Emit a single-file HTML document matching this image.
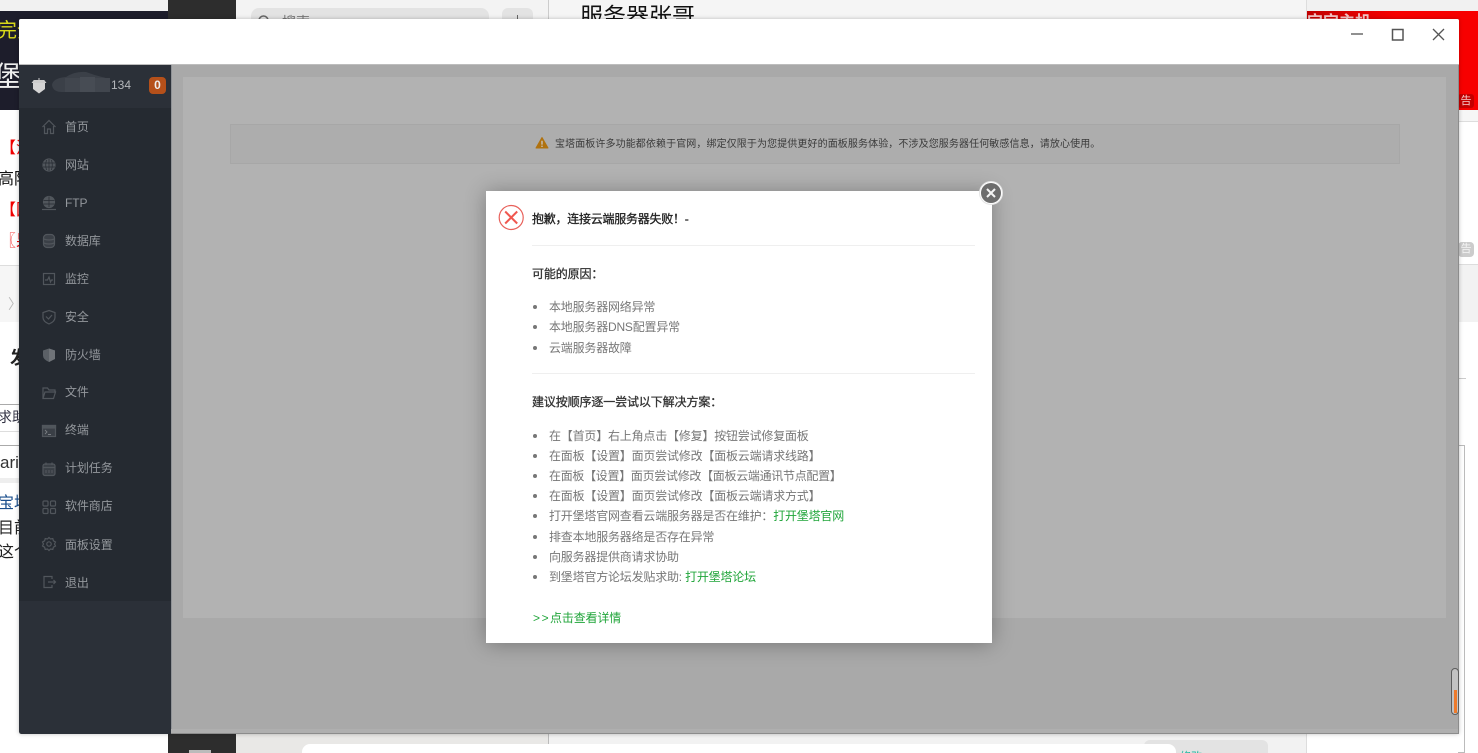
<!DOCTYPE html>
<html lang="zh"><head><meta charset="utf-8"><title>宝塔面板</title>
<style>
html,body{margin:0;padding:0;width:1478px;height:753px;overflow:hidden;background:#fff}
body{position:relative;font-family:"Liberation Sans","Noto Sans CJK SC",sans-serif}
.a{position:absolute}
.t{position:absolute;white-space:nowrap;line-height:20px}
.nav{position:absolute;left:65px;font-size:12px;color:#94989d;line-height:20px;white-space:nowrap;letter-spacing:-.1px}
.ic{position:absolute;left:41px;width:16px;height:16px;fill:none;stroke:#51565c;stroke-width:1.2}
.li{position:absolute;left:549px;font-size:12px;line-height:20px;color:#777;white-space:nowrap;letter-spacing:-.2px}
.li:before{content:"";position:absolute;left:-16px;top:8px;width:4px;height:4px;border-radius:50%;background:#777}
.li b{font-weight:400;color:#20a53a}
.h{position:absolute;left:532px;font-size:12px;line-height:20px;color:#333;font-weight:400;-webkit-text-stroke:.3px currentColor;white-space:nowrap;letter-spacing:-.12px}
.bg{font-size:16px;color:#111}
</style></head><body>
<!-- background page -->
<div class="a" style="left:0;top:0;width:168px;height:11px;background:#f1f1f1"></div>
<div class="a" style="left:0;top:11px;width:168px;height:99px;background:#1d1d2b"></div>
<div class="t" style="left:-3px;top:21px;font-size:20px;color:#d9d91a">完全</div>
<div class="t" style="left:-6px;top:67px;font-size:28px;color:#eee">堡</div>
<div class="t bg" style="left:0;top:139px;color:#f00000">【流</div>
<div class="t bg" style="left:-2px;top:170px">高阶</div>
<div class="t bg" style="left:0;top:201px;color:#f00000">【国</div>
<div class="t bg" style="left:0;top:232px;color:#f00000">〖果</div>
<div class="a" style="left:0;top:265px;width:168px;height:56px;background:#f6f6f6;border-top:1px solid #ddd"></div>
<div class="t" style="left:8px;top:294px;font-size:14px;color:#bbb">〉</div>
<div class="t" style="left:10px;top:348px;font-size:18px;color:#222;font-weight:700">发</div>
<div class="a" style="left:0;top:404px;width:168px;height:26px;border-top:1px solid #aaa;border-bottom:1px solid #ddd"></div>
<div class="t" style="left:-2px;top:407px;font-size:14px;color:#334">求助</div>
<div class="a" style="left:0;top:445px;width:168px;height:32px;border-top:1px solid #aaa;border-bottom:5px solid #eee"></div>
<div class="t" style="left:0;top:453px;font-size:17px;color:#333">arial</div>
<div class="t bg" style="left:-2px;top:494px;color:#1a4e8c">宝塔</div>
<div class="t bg" style="left:-2px;top:519px;color:#222">目前</div>
<div class="t bg" style="left:-2px;top:543px;color:#222">这个</div>

<div class="a" style="left:168px;top:0;width:68px;height:753px;background:#2d2d2d"></div>
<div class="a" style="left:236px;top:0;width:312px;height:19px;background:#f3f3f3"></div>
<div class="a" style="left:548px;top:0;width:758px;height:19px;background:#f5f5f5;border-left:1px solid #ccc"></div>
<div class="a" style="left:251px;top:8px;width:238px;height:20px;background:#e3e3e3;border-radius:8px"></div>
<svg class="a" style="left:257px;top:14px" width="14" height="14"><circle cx="6.5" cy="6.5" r="4.5" fill="none" stroke="#666" stroke-width="1.5"/></svg>
<div class="t" style="left:282px;top:12px;font-size:14px;color:#777">搜索</div>
<div class="a" style="left:502px;top:8px;width:31px;height:20px;background:#e3e3e3;border-radius:6px"></div>
<div class="a" style="left:517px;top:15px;width:1px;height:6px;background:#666"></div>
<div class="t" style="left:580px;top:2px;font-size:23px;color:#111;line-height:28px">服务器张哥</div>
<div class="a" style="left:1306px;top:0;width:172px;height:11px;background:#f1f1f1;border-left:1px solid #bbb"></div>
<div class="a" style="left:1306px;top:11px;width:172px;height:99px;background:#f70000"></div>
<div class="a" style="left:1306px;top:11px;width:90px;height:8px;background:linear-gradient(90deg,#c00000,#f70000)"></div>
<div class="t" style="left:1307px;top:13px;font-size:16px;font-weight:700;color:#f3c4c4">宝宝主机</div>
<div class="a" style="left:1458px;top:94px;width:16px;height:14px;background:#c40000;border-radius:3px;font-size:11px;line-height:14px;color:#f5caca;text-align:center">告</div>
<div class="a" style="left:1306px;top:110px;width:172px;height:11px;background:#f6f6f6;border-bottom:1px solid #ddd"></div>
<div class="a" style="left:1458px;top:242px;width:16px;height:15px;background:#ccc;border-radius:4px;font-size:11px;line-height:15px;color:#f4f4f4;text-align:center">告</div>
<div class="a" style="left:1458px;top:264px;width:20px;height:57px;background:#f2f2f2;border-top:1px solid #ddd"></div>
<div class="a" style="left:1458px;top:378px;width:8px;height:1px;background:#ccc"></div>
<div class="a" style="left:1458px;top:445px;width:7px;height:308px;border:1px solid #bbb;border-left:0;box-sizing:border-box"></div>
<div class="a" style="left:236px;top:734px;width:312px;height:19px;background:#e9e8e6"></div>
<div class="a" style="left:548px;top:734px;width:758px;height:19px;background:#f2f2f2"></div>
<div class="a" style="left:548px;top:734px;width:1px;height:10px;background:#bbb"></div>
<div class="a" style="left:1144px;top:740px;width:124px;height:13px;background:#e3e3e3;border-radius:6px 6px 0 0"></div>
<div class="a" style="left:302px;top:744px;width:874px;height:9px;background:#fff;border-radius:8px 8px 0 0"></div>
<div class="t" style="left:1180px;top:747px;font-size:11px;color:#20b8a0">修改</div>
<div class="a" style="left:1306px;top:0;width:1px;height:753px;background:#ddd"></div>
<div class="a" style="left:189px;top:750px;width:22px;height:3px;background:#bbb"></div>

<!-- window -->
<div class="a" style="left:19px;top:19px;width:1440px;height:715px;background:#a9a9a9;border-radius:2px;overflow:hidden;box-shadow:0 0 4px rgba(0,0,0,.25)">
  <div class="a" style="left:0;top:0;width:1440px;height:45px;background:#fff;border-bottom:1px solid #bdbdbd;box-sizing:content-box"></div>
</div>
<svg class="a" style="left:1340px;top:24px" width="110" height="20" fill="none" stroke="#555" stroke-width="1.3">
  <path d="M11 10H23"/>
  <rect x="52.5" y="5.5" width="10.5" height="10.5" stroke-width="1.5"/>
  <path d="M93 5L104 16M104 5L93 16"/>
</svg>

<!-- main -->
<div class="a" style="left:171px;top:65px;width:1287px;height:664px;background:#a9a9a9;border-left:1px solid #8f9296;box-sizing:border-box"></div>
<div class="a" style="left:171px;top:729px;width:1287px;height:4px;background:#afafaf"></div>
<div class="a" style="left:1458px;top:65px;width:1px;height:668px;background:#8c8c8c"></div>
<div class="a" style="left:171px;top:733px;width:1288px;height:1px;background:#8c8c8c"></div>
<div class="a" style="left:183px;top:77px;width:1263px;height:541px;background:#b2b2b2"></div>
<div class="a" style="left:230px;top:124px;width:1170px;height:40px;background:#adadad;border:1px solid #a7a7a7;box-sizing:border-box"></div>
<svg class="a" style="left:535px;top:136px" width="14" height="13"><path d="M7 1.5L13 12H1Z" fill="#b0720f" stroke="#b0720f" stroke-linejoin="round"/><path d="M7 4.8V8.6M7 9.6V11" stroke="#c9c9c9" stroke-width="1.3"/></svg>
<div class="t" style="left:555px;top:137px;font-size:10px;color:#3a3a3a;width:545px;letter-spacing:.1px;line-height:16px">宝塔面板许多功能都依赖于官网，绑定仅限于为您提供更好的面板服务体验，不涉及您服务器任何敏感信息，请放心使用。</div>

<!-- sidebar -->
<div class="a" style="left:19px;top:65px;width:152px;height:669px;background:#252a31;border-radius:0 0 0 3px"></div>
<div class="a" style="left:19px;top:65px;width:152px;height:43px;background:#2b3038"></div>
<div class="a" style="left:19px;top:601px;width:152px;height:133px;background:#2b3038;border-radius:0 0 0 3px"></div>
<svg class="a" style="left:31px;top:77px" width="16" height="18"><path d="M2 5H14V12L8 16.5L2 12Z" fill="#d4d4d4"/><path d="M8 1V4M3 3.5H13L14.5 5.5H1.5Z" stroke="#ccc" fill="#ccc"/></svg>
<svg class="a" style="left:50px;top:70px" width="62" height="24"><path d="M2 15Q3 8 16 7Q25 1 36 2Q44 5 52 7Q60 8 60 15Q60 22 50 22H12Q3 22 2 15Z" fill="#3b4048"/><rect x="15" y="8" width="15" height="14" fill="#41464e"/><rect x="30" y="7" width="15" height="15" fill="#474c54"/><rect x="45" y="8" width="15" height="14" fill="#41464e"/></svg>
<div class="t" style="left:111px;top:75px;font-size:12px;color:#b4b7bb">134</div>
<div class="a" style="left:149px;top:77px;width:17px;height:17px;background:#b5501a;border-radius:4px;color:#eee;font-size:12px;font-weight:700;line-height:17px;text-align:center">0</div>

<svg class="ic" style="top:119px" viewBox="0 0 16 16"><path d="M1.5 8L8 1.5L14.5 8M3.5 7V14.5H6.5V10H9.5V14.5H12.5V7"/></svg>
<div class="nav" style="top:117px">首页</div>
<svg class="ic" style="top:157px" viewBox="0 0 16 16"><circle cx="8" cy="8" r="6" fill="#51565c"/><path d="M2 6H14M2 10H14M8 2V14M5.5 3Q4 8 5.5 13M10.5 3Q12 8 10.5 13" stroke="#252a31" stroke-width=".7"/></svg>
<div class="nav" style="top:155px">网站</div>
<svg class="ic" style="top:195px" viewBox="0 0 16 16"><circle cx="8" cy="7" r="5.5" fill="#51565c"/><path d="M2.5 5.5H13.5M2.5 9H13.5M8 1.5V12" stroke="#252a31" stroke-width=".7"/><path d="M1 14.5H15"/></svg>
<div class="nav" style="top:193px">FTP</div>
<svg class="ic" style="top:233px" viewBox="0 0 16 16"><rect x="2.5" y="1.5" width="11" height="13" rx="3.5" fill="#3b4047"/><path d="M2.5 6Q8 8 13.5 6M2.5 10Q8 12 13.5 10"/></svg>
<div class="nav" style="top:231px">数据库</div>
<svg class="ic" style="top:271px" viewBox="0 0 16 16"><rect x="2.5" y="2.5" width="11" height="11"/><path d="M4 9H6.5L8 6L9.5 11L10.5 9H12"/></svg>
<div class="nav" style="top:269px">监控</div>
<svg class="ic" style="top:309px" viewBox="0 0 16 16"><path d="M8 1.5L14 3.5V8.5Q14 12.5 8 15Q2 12.5 2 8.5V3.5Z"/><path d="M5 7.5L7.5 10L11 6"/></svg>
<div class="nav" style="top:307px">安全</div>
<svg class="ic" style="top:347px" viewBox="0 0 16 16"><path d="M8 1.5L14 3.5V8.5Q14 12.5 8 15Q2 12.5 2 8.5V3.5Z" fill="#5b6066" stroke="none"/><path d="M8 1.5V15L14 12V3.5Z" fill="#6f7378" stroke="none"/></svg>
<div class="nav" style="top:345px">防火墙</div>
<svg class="ic" style="top:385px" viewBox="0 0 16 16"><path d="M2 13.5V3H6.5L8 5H14V7M2 13.5H12.5L14.5 7H4Z"/></svg>
<div class="nav" style="top:382px">文件</div>
<svg class="ic" style="top:423px" viewBox="0 0 16 16"><rect x="1.5" y="2.5" width="13" height="11" fill="#3a3f46"/><rect x="1.5" y="2.5" width="13" height="2.5" fill="#51565c"/><path d="M4 7L6 9L4 11M7 11.5H10" stroke="#7a7e83" stroke-width=".9"/></svg>
<div class="nav" style="top:420px">终端</div>
<svg class="ic" style="top:461px" viewBox="0 0 16 16"><rect x="2" y="3" width="12" height="11.5" rx="2" fill="#3a3f46"/><path d="M5 1.5V4M11 1.5V4M2 6.5H14M5 9V12M8 9V12M11 9V12"/></svg>
<div class="nav" style="top:458px">计划任务</div>
<svg class="ic" style="top:499px" viewBox="0 0 16 16"><rect x="2" y="2" width="5" height="5" rx="1"/><rect x="9.5" y="2" width="5" height="5" rx="1"/><rect x="2" y="9.5" width="5" height="5" rx="1"/><rect x="9.5" y="9.5" width="5" height="5" rx="1"/></svg>
<div class="nav" style="top:496px">软件商店</div>
<svg class="ic" style="top:536px" viewBox="0 0 16 16"><circle cx="8" cy="8" r="2.2"/><path d="M8 1.5L9.5 3L11.8 2.6L12.4 4.8L14.5 6L13.5 8L14.5 10L12.4 11.2L11.8 13.4L9.5 13L8 14.5L6.5 13L4.2 13.4L3.6 11.2L1.5 10L2.5 8L1.5 6L3.6 4.8L4.2 2.6L6.5 3Z"/></svg>
<div class="nav" style="top:535px">面板设置</div>
<svg class="ic" style="top:574px" viewBox="0 0 16 16"><path d="M11 5V2.5H3V13.5H11V11M7 8H14.5M12.5 6L14.5 8L12.5 10"/></svg>
<div class="nav" style="top:573px">退出</div>

<!-- scroll widget -->
<div class="a" style="left:1451px;top:668px;width:8px;height:47px;box-sizing:border-box;border:1.5px solid #5c5c5c;border-radius:4px;background:#c2c2c2"></div>
<div class="a" style="left:1453.5px;top:690px;width:3px;height:23px;background:#ee7a2a"></div>

<!-- modal -->
<div class="a" style="left:486px;top:191px;width:506px;height:452px;background:#fff;box-shadow:0 1px 20px rgba(0,0,0,.3)"></div>
<svg class="a" style="left:498px;top:204px" width="27" height="27" fill="none"><circle cx="13.2" cy="13.5" r="12" stroke="#e8605a" stroke-width="1.2"/><path d="M7.2 7.5L19.2 19.5M19.2 7.5L7.2 19.5" stroke="#f0574f" stroke-width="2"/></svg>
<div class="h" style="top:209px;color:#222;letter-spacing:-.25px">抱歉，连接云端服务器失败！-</div>
<div class="a" style="left:532px;top:245px;width:443px;height:1px;background:#efefef"></div>
<div class="h" style="top:264px;color:#333">可能的原因：</div>
<div class="li" style="top:297px">本地服务器网络异常</div>
<div class="li" style="top:317px">本地服务器DNS配置异常</div>
<div class="li" style="top:337.5px">云端服务器故障</div>
<div class="a" style="left:532px;top:373px;width:443px;height:1px;background:#efefef"></div>
<div class="h" style="top:392px;color:#333">建议按顺序逐一尝试以下解决方案：</div>
<div class="li" style="top:425.5px">在【首页】右上角点击【修复】按钮尝试修复面板</div>
<div class="li" style="top:445.5px">在面板【设置】面页尝试修改【面板云端请求线路】</div>
<div class="li" style="top:466px;letter-spacing:-.3px">在面板【设置】面页尝试修改【面板云端通讯节点配置】</div>
<div class="li" style="top:486px">在面板【设置】面页尝试修改【面板云端请求方式】</div>
<div class="li" style="top:506px">打开堡塔官网查看云端服务器是否在维护：<b>打开堡塔官网</b></div>
<div class="li" style="top:526.5px">排查本地服务器络是否存在异常</div>
<div class="li" style="top:547px">向服务器提供商请求协助</div>
<div class="li" style="top:567px">到堡塔官方论坛发贴求助: <b>打开堡塔论坛</b></div>
<div class="t" style="left:533px;top:607.5px;font-size:12px;color:#20a53a;letter-spacing:-.15px"><span style="display:inline-block;width:17px;letter-spacing:1.6px">&gt;&gt;</span>点击查看详情</div>
<svg class="a" style="left:979px;top:181px" width="24" height="24"><circle cx="12" cy="12" r="11.5" fill="#fff" stroke="#e6e6e6"/><circle cx="12" cy="12" r="10" fill="#6d6d6d"/><path d="M8 8L16 16M16 8L8 16" stroke="#f4f4f4" stroke-width="2"/></svg>
</body></html>
